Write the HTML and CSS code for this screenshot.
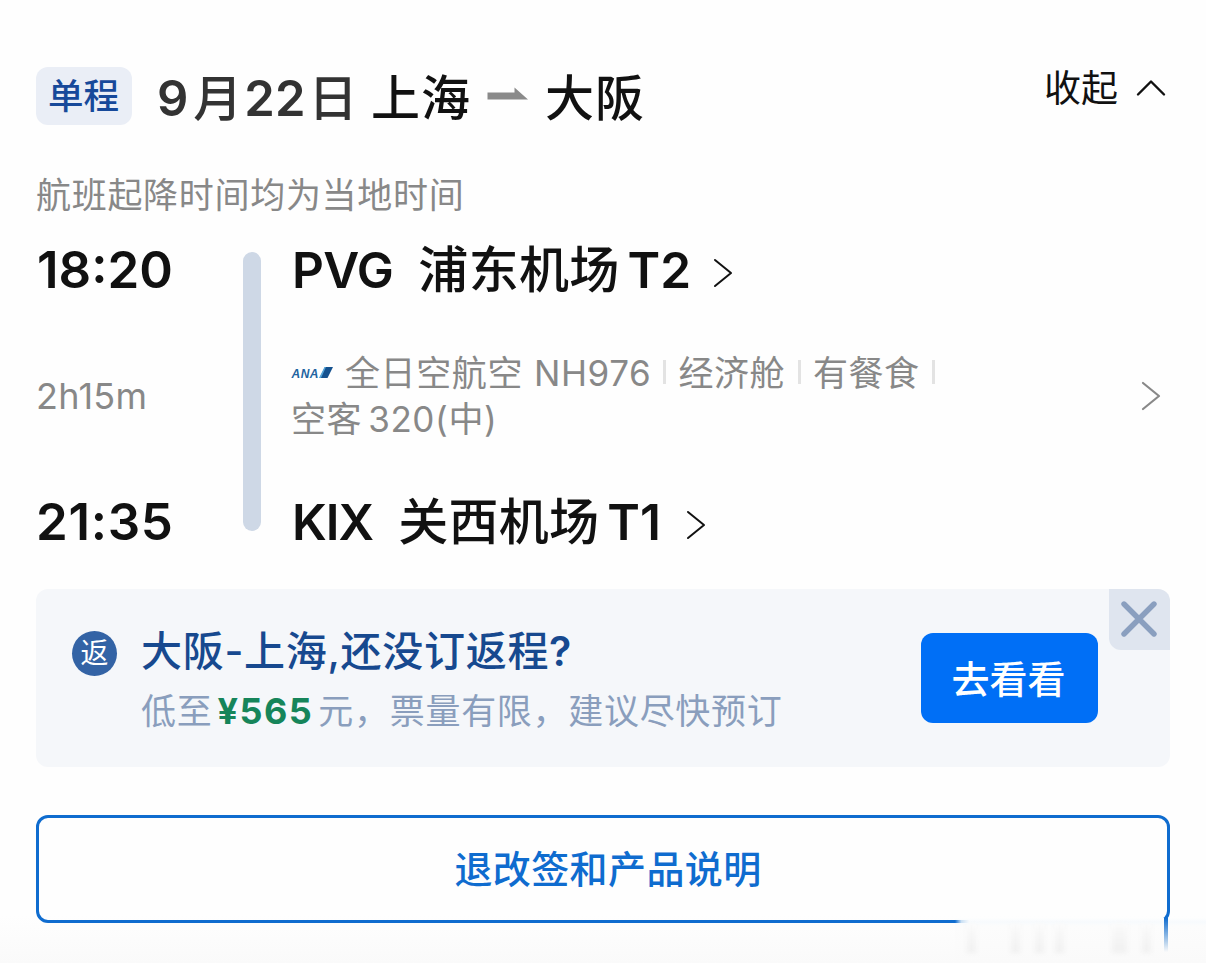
FILE: index.html
```html
<!DOCTYPE html>
<html lang="zh-CN">
<head>
<meta charset="utf-8">
<title>9月22日 上海 - 大阪</title>
<link rel="stylesheet" href="styles.css">
</head>
<body>
<main class="page">
  <header class="head">
    <span class="tag">单程</span>
    <h1 class="title">
      <span class="date">9<span class="cjk month">月</span>22<span class="cjk day">日</span></span>
      <span class="city">上海</span>
      <svg class="route" width="42" height="14" viewBox="0 0 42 14"><path d="M0.5 5.5H27.5V0.5L41 12.5H0.5Z" fill="#8a8a8a"/></svg>
      <span class="city">大阪</span>
    </h1>
    <button class="fold"><span>收起</span><svg width="30" height="18" viewBox="0 0 30 18"><path d="M2 15.5L15 2.5L28 15.5" fill="none" stroke="#111" stroke-width="2.4" stroke-linecap="round" stroke-linejoin="round"/></svg></button>
  </header>
  <p class="note">航班起降时间均为当地时间</p>
  <section class="trip">
    <div class="times">
      <span class="time">18:20</span>
      <span class="duration">2h15m</span>
      <span class="time arrive">21:35</span>
    </div>
    <div class="bar"></div>
    <div class="stops">
      <div class="airport"><span class="code">PVG</span><span class="name cjk">浦东机场</span><span class="terminal">T2</span><svg width="20" height="30" viewBox="0 0 20 30"><path d="M2 2L18 15L2 28" fill="none" stroke="#111" stroke-width="2" stroke-linecap="round" stroke-linejoin="round"/></svg></div>
      <div class="flight">
        <div class="line">
          <svg class="ana" width="43" height="14" viewBox="0 0 43 14"><text x="0.5" y="12" font-family="Liberation Sans, sans-serif" font-size="13.5" font-weight="700" font-style="italic" fill="#2263a0" textLength="27.5" lengthAdjust="spacingAndGlyphs">ANA</text><path d="M34 1H42L36.5 12H28.5Z" fill="#15528f"/><path d="M33.5 1H35L30 12H28Z" fill="#55a5d8"/></svg>
          <span class="airline">全日空航空</span><span class="number">NH976</span><i class="sep"></i><span class="cabin">经济舱</span><i class="sep"></i><span class="meal">有餐食</span><i class="sep"></i>
        </div>
        <div class="line plane"><span>空客</span><span class="model">320(中)</span></div>
      </div>
      <div class="airport second"><span class="code">KIX</span><span class="name cjk">关西机场</span><span class="terminal">T1</span><svg width="20" height="30" viewBox="0 0 20 30"><path d="M2 2L18 15L2 28" fill="none" stroke="#111" stroke-width="2" stroke-linecap="round" stroke-linejoin="round"/></svg></div>
    </div>
    <svg class="more" width="20" height="30" viewBox="0 0 20 30"><path d="M2 2L18 15L2 28" fill="none" stroke="#888" stroke-width="2.2" stroke-linecap="round" stroke-linejoin="round"/></svg>
  </section>
  <section class="promo">
    <span class="badge">返</span>
    <div class="copy">
      <p class="ask">大阪-上海,还没订返程<b>?</b></p>
      <p class="offer"><span>低至</span><b class="price">¥565</b><span class="rest">元，票量有限，建议尽快预订</span></p>
    </div>
    <button class="go">去看看</button>
    <button class="close"><svg width="36" height="36" viewBox="0 0 36 36"><path d="M3 3L33 33M33 3L3 33" fill="none" stroke="#8a9fbf" stroke-width="5.4" stroke-linecap="round"/></svg></button>
  </section>
  <button class="rules">退改签和产品说明</button>
  <div class="smudge"><i class="m1"></i><i class="m2"></i><i class="m3"></i><i class="m4"></i><i class="m5"></i><i class="m6"></i><i class="edge"></i><i class="tail"></i></div>
</main>
</body>
</html>
```
FILE: styles.css
```css
* { box-sizing: border-box; margin: 0; padding: 0; }
body { background: #fefefe; font-family: Inter, "Noto Sans CJK SC", sans-serif; color: #111; }
button { border: 0; background: none; font: inherit; color: inherit; }
svg { display: block; flex: none; }
.page { position: relative; width: 1206px; height: 963px; padding: 67px 36px 0; overflow: hidden; display: flex; flex-direction: column; background: linear-gradient(#fefefe 915px, #fafafa 963px); white-space: nowrap; }
.head { display: flex; height: 58px; flex: none; }
.tag { width: 96px; height: 58px; border-radius: 12px; background: #eaeef6; color: #17499a; font-size: 35.5px; font-weight: 500; line-height: 60px; text-align: center; text-indent: -1px; }
.title { display: flex; align-items: center; margin-left: 25px; height: 64px; font-size: 49px; font-weight: 500; line-height: 64px; }
.date { color: #333; font-weight: 600; letter-spacing: 0; width: 214px; }
.cjk { font-weight: 500; }
.month { margin: 0 2px 0 5px; }
.day { margin-left: 3px; }
.city { letter-spacing: 1px; width: 99px; }
.route { margin: 0 16px 10px 17px; }
.fold { display: flex; align-items: center; gap: 18px; margin-left: auto; margin-right: 4px; height: 42px; font-size: 37px; line-height: 44px; }
.fold span { padding-top: 2px; }
.fold svg { margin-top: -1px; }
.note { height: 48px; margin-top: 46px; font-size: 35px; line-height: 48px; letter-spacing: .7px; color: #888; }
.trip { display: flex; height: 330px; flex: none; margin-top: 21px; }
.times { width: 207px; display: flex; flex-direction: column; }
.time { height: 62px; padding-left: 1px; font-size: 51px; line-height: 60px; font-weight: 600; }
.duration { height: 44px; margin-top: 73px; font-size: 36px; line-height: 42px; letter-spacing: .3px; color: #888; }
.arrive { margin-top: 73px; padding-left: 0; letter-spacing: .7px; }
.bar { width: 18px; height: 279px; margin-top: 12px; border-radius: 9px; background: #ced8e6; }
.stops { margin-left: 31px; width: 700px; }
.airport { display: flex; align-items: center; height: 62px; font-size: 49.5px; line-height: 60px; font-weight: 600; }
.airport svg { margin: 3px 0 0 22px; }
.code { letter-spacing: -.6px; margin-top: -2px; }
.name { margin-left: 25px; font-size: 50px; letter-spacing: .3px; margin-top: -2px; }
.terminal { margin-left: 8px; margin-top: -2px; }
.second .code { letter-spacing: -1px; }
.second svg { margin-left: 25px; }
.flight { margin-top: 48px; height: 92px; font-size: 35px; color: #888; }
.line { display: flex; align-items: center; height: 46px; line-height: 46px; letter-spacing: .6px; }
.ana { margin-left: -1px; }
.airline { margin-left: 11px; }
.number { margin-left: 11px; }
.sep { flex: none; width: 3px; height: 24px; background: #e3e3e3; margin: -2px 13px 0 12px; }
.number + .sep { margin-right: 12px; }
.cabin, .meal { letter-spacing: .5px; }
.cabin + .sep, .meal + .sep { margin-left: 13px; margin-right: 12px; }
.plane { letter-spacing: .6px; text-indent: -1px; }
.model { margin-left: 7px; }
.second { margin-top: 50px; }
.more { margin: 141px 9px 0 auto; }
.promo { position: relative; display: flex; flex: none; height: 178px; margin-top: 19px; border-radius: 12px; background: #f5f7fa; }
.badge { width: 45px; height: 45px; margin: 42px 0 0 36px; border-radius: 50%; background: #3363a5; color: #fff; font-size: 28px; line-height: 45px; text-align: center; }
.copy { margin: 36px 0 0 24px; }
.ask { height: 54px; font-size: 41px; line-height: 53px; letter-spacing: .7px; font-weight: 500; color: #17498f; }
.ask b { font-weight: 600; }
.offer { display: flex; height: 48px; margin-top: 8px; font-size: 35px; line-height: 48px; letter-spacing: .7px; color: #8a9ebd; }
.price { margin: 0 5px 0 5px; font-size: 36px; letter-spacing: 1.5px; color: #16855a; font-weight: 700; }
.go { width: 177px; height: 90px; margin: 44px 72px 0 auto; padding: 0 2px 4px 0; border-radius: 12px; background: #006ff6; color: #fff; font-size: 38px; font-weight: 500; }
.close { position: absolute; top: 0; right: 0; width: 61px; height: 61px; padding: 0 2px 1px 0; border-radius: 0 12px 0 12px; background: #dfe5ef; display: flex; align-items: center; justify-content: center; }
.rules { flex: none; height: 108px; margin-top: 48px; padding: 0 0 5px 10px; border: 3px solid #0f6ccf; border-radius: 12px; font-size: 38px; letter-spacing: .4px; font-weight: 500; color: #0f6ccf; }
/* Faded patch over the lower right corner of the button */
.smudge { position: absolute; left: 955px; top: 918px; width: 251px; height: 45px; background: linear-gradient(#fdfefe 0, #f7fafd 4px, #fcfcfc 8px, #fafafa 45px); }
.smudge i { position: absolute; top: 6px; height: 29px; width: 9px; background: linear-gradient(#fafafa, #f0f0f0); filter: blur(2px); }
.smudge .m1 { left: 12px; }
.smudge .m2 { left: 56px; }
.smudge .m3 { left: 80px; }
.smudge .m4 { left: 100px; }
.smudge .m5 { left: 157px; width: 15px; }
.smudge .m6 { left: 187px; }
.smudge .edge { left: 0; top: 2px; width: 14px; height: 3px; background: linear-gradient(90deg, #0f6ccf, #c9dff3 45%, #f7fafd); filter: none; }
.smudge .tail { left: 209px; top: 0; width: 4px; height: 34px; background: linear-gradient(#0f6ccf, #a9c9e9 65%, #fafafa); filter: blur(.5px); }
```
